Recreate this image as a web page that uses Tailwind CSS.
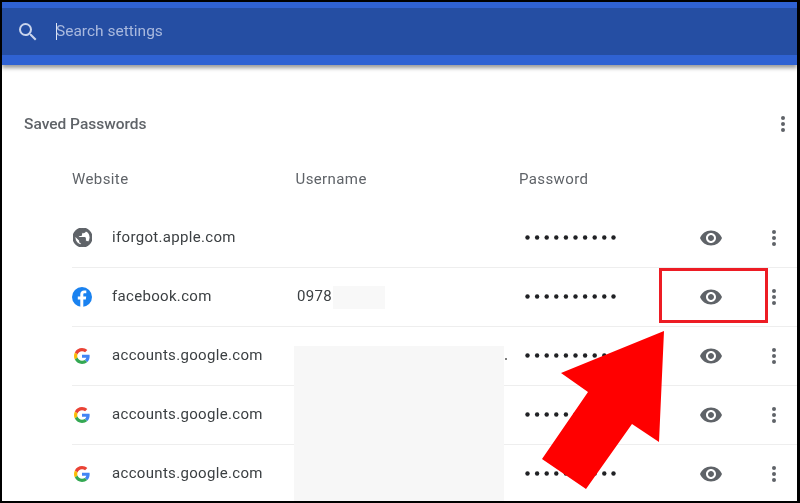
<!DOCTYPE html>
<html lang="en">
<head>
    <meta charset="UTF-8">
    <title>Saved Passwords</title>
    <script src="https://cdn.jsdelivr.net/npm/@tailwindcss/browser@4"></script>
</head>
<body class="bg-black font-['Roboto',sans-serif]">
    <svg class="hidden">
        <symbol id="eye" viewBox="0 0 24 24"><path fill="#5f6368" d="M12 4.500C7 4.500 2.730 7.610 1 12c1.730 4.390 6 7.500 11 7.500s9.270-3.110 11-7.500c-1.730-4.390-6-7.500-11-7.500zM12 17c-2.760 0-5-2.240-5-5s2.240-5 5-5 5 2.240 5 5-2.240 5-5 5zm0-8c-1.660 0-3 1.340-3 3s1.340 3 3 3 3-1.340 3-3-1.340-3-3-3z"/></symbol>
        <symbol id="more" viewBox="0 0 6 18"><g fill="#5f6368"><circle cx="3" cy="3" r="2"/><circle cx="3" cy="9" r="2"/><circle cx="3" cy="15" r="2"/></g></symbol>
        <symbol id="google" viewBox="0 0 48 48">
            <path fill="#EA4335" d="M24 9.500c3.540 0 6.710 1.220 9.210 3.600l6.850-6.850C35.900 2.380 30.470 0 24 0 14.620 0 6.510 5.380 2.560 13.220l7.980 6.190C12.430 13.720 17.740 9.500 24 9.500z"/>
            <path fill="#4285F4" d="M46.980 24.550c0-1.570-.15-3.090-.38-4.550H24v9.020h12.940c-.58 2.960-2.260 5.480-4.780 7.180l7.730 6c4.510-4.180 7.090-10.360 7.090-17.650z"/>
            <path fill="#FBBC05" d="M10.530 28.590c-.48-1.450-.76-2.990-.76-4.590s.27-3.140.76-4.590l-7.980-6.190C.92 16.460 0 20.120 0 24c0 3.880.92 7.540 2.560 10.780l7.970-6.190z"/>
            <path fill="#34A853" d="M24 48c6.480 0 11.930-2.130 15.890-5.810l-7.730-6c-2.150 1.450-4.920 2.300-8.160 2.300-6.260 0-11.570-4.220-13.470-9.910l-7.980 6.190C6.510 42.620 14.620 48 24 48z"/>
        </symbol>
        <symbol id="dots" viewBox="0 0 91 5"><g fill="#202124"><circle cx="2.500" cy="2.500" r="2.200"/><circle cx="12.100" cy="2.500" r="2.200"/><circle cx="21.700" cy="2.500" r="2.200"/><circle cx="31.300" cy="2.500" r="2.200"/><circle cx="40.900" cy="2.500" r="2.200"/><circle cx="50.500" cy="2.500" r="2.200"/><circle cx="60.100" cy="2.500" r="2.200"/><circle cx="69.700" cy="2.500" r="2.200"/><circle cx="79.300" cy="2.500" r="2.200"/><circle cx="88.500" cy="2.500" r="2.200"/></g></symbol>
    </svg>

    <div class="relative w-[795px] h-[499px] ml-[2px] pt-[2px] box-content overflow-hidden">
        <div class="bg-white h-[499px] overflow-hidden blur-[0.35px]">
            <!-- search bar -->
            <div class="bg-[#2f62d3] pt-[6px] pb-[10px] shadow-[0_3px_4px_rgba(0,0,0,0.4)]">
                <div class="h-[47px] bg-[#254ea3] flex items-center pl-[14px]">
                    <svg class="w-[24px] h-[24px]" viewBox="0 0 24 24"><path fill="#c9d4ec" d="M15.500 14h-.79l-.28-.27A6.470 6.470 0 0 0 16 9.500 6.500 6.500 0 1 0 9.500 16c1.610 0 3.090-.59 4.230-1.570l.27.28v.79l5 4.990L20.490 19l-4.990-5zm-6 0C7.010 14 5 11.990 5 9.500S7.010 5 9.500 5 14 7.010 14 9.500 11.990 14 9.500 14z"/></svg>
                    <div class="ml-[16px] w-px h-[17px] bg-[#dfe6f5]"></div>
                    <span class="-ml-px text-[15.500px] text-[#a9b9de]">Search settings</span>
                </div>
            </div>

            <!-- section title -->
            <div class="flex items-center justify-between h-[30px] mt-[45px] pl-[22px] pr-[11px]">
                <h2 class="text-[15.500px] font-medium text-[#5f6368]">Saved Passwords</h2>
                <svg class="w-[6px] h-[18px] -mt-[2px]"><use href="#more"/></svg>
            </div>

            <!-- password list -->
            <div class="ml-[70px] mt-[16px]">
                <div class="h-[52px] pb-[5px] flex items-center text-[15px] tracking-[0.4px] text-[#5f6368]">
                    <span class="w-[223.500px]">Website</span>
                    <span class="w-[223.500px]">Username</span>
                    <span>Password</span>
                </div>

                <div class="h-[59px] flex items-center text-[15px] tracking-[0.32px] text-[#3c4043]">
                    <div class="w-[40px] pl-[1px]">
                        <svg class="w-[19px] h-[19px]" viewBox="2 2 20 20"><path fill="#5f6368" stroke="#5f6368" stroke-width="1.100" d="M12 2C6.480 2 2 6.480 2 12s4.480 10 10 10 10-4.480 10-10S17.520 2 12 2zm-1 17.930c-3.950-.49-7-3.850-7-7.930 0-.62.08-1.210.21-1.790L9 15v1c0 1.100.9 2 2 2v1.930zm6.900-2.540c-.26-.81-1-1.390-1.900-1.390h-1v-3c0-.55-.45-1-1-1H8v-2h2c.55 0 1-.45 1-1V7h2c1.100 0 2-.9 2-2v-.41c2.930 1.190 5 4.060 5 7.410 0 2.080-.8 3.970-2.100 5.390z"/></svg>
                    </div>
                    <span class="w-[413px]">iforgot.apple.com</span>
                    <svg class="w-[91px] h-[5px]"><use href="#dots"/></svg>
                    <svg class="w-[24px] h-[24px] ml-[83px]"><use href="#eye"/></svg>
                    <svg class="w-[6px] h-[18px] ml-[48px]"><use href="#more"/></svg>
                </div>

                <div class="h-[59px] pb-[1px] flex items-center text-[15px] tracking-[0.32px] text-[#3c4043] border-t border-[#eeeeee]">
                    <div class="w-[40px]">
                        <svg class="w-[20px] h-[20px]" viewBox="0 0 20 20"><circle cx="10" cy="10" r="10" fill="#1a82f0"/><path fill="#fff" d="M11.300 20v-7.600h2.500l.4-3h-2.900V7.700c0-.9.300-1.400 1.500-1.400h1.500V3.600c-.3 0-1.200-.1-2.200-.1-2.200 0-3.800 1.400-3.800 3.800v2.100H5.800v3h2.500V20z"/></svg>
                    </div>
                    <span class="w-[185px]">facebook.com</span>
                    <span class="w-[228px]">0978</span>
                    <svg class="w-[91px] h-[5px]"><use href="#dots"/></svg>
                    <svg class="w-[24px] h-[24px] ml-[83px]"><use href="#eye"/></svg>
                    <svg class="w-[6px] h-[18px] ml-[48px]"><use href="#more"/></svg>
                </div>

                <div class="h-[59px] pb-[1px] flex items-center text-[15px] tracking-[0.32px] text-[#3c4043] border-t border-[#eeeeee]">
                    <div class="w-[40px] pl-[2px]"><svg class="w-[16px] h-[16px]"><use href="#google"/></svg></div>
                    <span class="w-[413px]">accounts.google.com</span>
                    <svg class="w-[91px] h-[5px]"><use href="#dots"/></svg>
                    <svg class="w-[24px] h-[24px] ml-[83px]"><use href="#eye"/></svg>
                    <svg class="w-[6px] h-[18px] ml-[48px]"><use href="#more"/></svg>
                </div>

                <div class="h-[59px] pb-[1px] flex items-center text-[15px] tracking-[0.32px] text-[#3c4043] border-t border-[#eeeeee]">
                    <div class="w-[40px] pl-[2px]"><svg class="w-[16px] h-[16px]"><use href="#google"/></svg></div>
                    <span class="w-[413px]">accounts.google.com</span>
                    <svg class="w-[91px] h-[5px]"><use href="#dots"/></svg>
                    <svg class="w-[24px] h-[24px] ml-[83px]"><use href="#eye"/></svg>
                    <svg class="w-[6px] h-[18px] ml-[48px]"><use href="#more"/></svg>
                </div>

                <div class="h-[59px] pb-[1px] flex items-center text-[15px] tracking-[0.32px] text-[#3c4043] border-t border-[#eeeeee]">
                    <div class="w-[40px] pl-[2px]"><svg class="w-[16px] h-[16px]"><use href="#google"/></svg></div>
                    <span class="w-[413px]">accounts.google.com</span>
                    <svg class="w-[91px] h-[5px]"><use href="#dots"/></svg>
                    <svg class="w-[24px] h-[24px] ml-[83px]"><use href="#eye"/></svg>
                    <svg class="w-[6px] h-[18px] ml-[48px]"><use href="#more"/></svg>
                </div>
            </div>
        </div>

        <!-- blurred out usernames and annotations on top of the screenshot -->
        <div class="absolute left-[331px] top-[286px] w-[52px] h-[23px] bg-[#f8f8f8]"></div>
        <div class="absolute left-[292px] top-[346px] w-[210px] h-[155px] bg-[#f7f7f7]"></div>
        <div class="absolute left-[503px] top-[358px] w-[2px] h-[2px] rounded-full bg-[#555]"></div>
        <div class="absolute left-[657px] top-[268px] w-[109px] h-[55px] border-[3px] border-[#ed1c24]"></div>
        <svg class="absolute left-0 top-0 w-[798px] h-[501px]" viewBox="2 0 798 501"><polygon fill="#ff0000" points="664,331 561,373 588,392 542,459 586,489 632,424 659,442"/></svg>
    </div>
</body>
</html>
